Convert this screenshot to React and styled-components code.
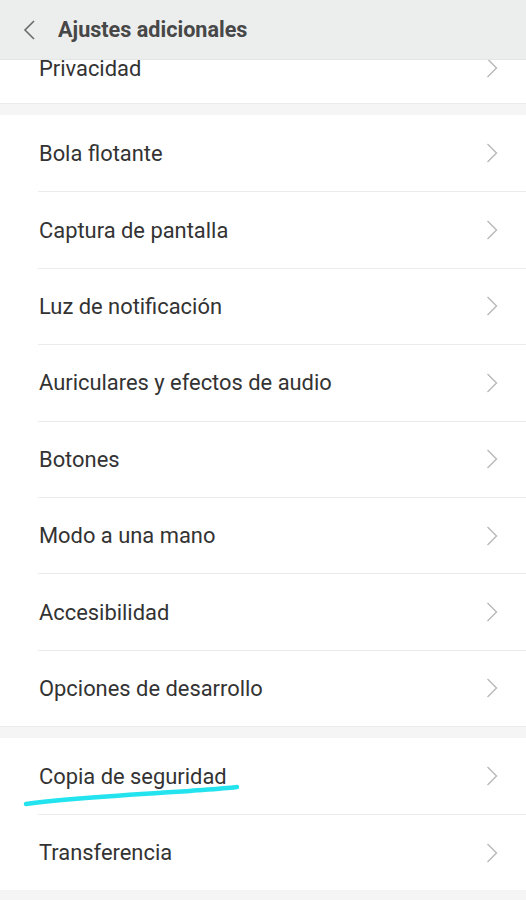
import React from 'react';
import styled, { createGlobalStyle } from 'styled-components';

const GlobalStyle = createGlobalStyle`
    html, body {
        margin: 0;
        padding: 0;
        background: #f5f5f5;
    }
    body {
        font-family: Roboto, "Noto Sans", "Liberation Sans", sans-serif;
        -webkit-font-smoothing: antialiased;
    }
`;

const Screen = styled.div`
    width: 526px;
    height: 900px;
    display: flex;
    flex-direction: column;
    overflow: hidden;
    background: #f5f5f5;
`;

const Header = styled.div`
    height: 59px;
    flex-shrink: 0;
    display: flex;
    align-items: center;
    gap: 22px;
    padding-left: 22px;
    background: #eceeee;
    border-bottom: 1px solid #e4e6e6;
    z-index: 1;
`;

const Title = styled.h1`
    margin: 0;
    font-size: 21.6px;
    font-weight: 700;
    color: #474747;
`;

const Scroller = styled.div`
    flex: 1;
    overflow: hidden;
    position: relative;
`;

const List = styled.div`
    display: flex;
    flex-direction: column;
    margin-top: -27px;
`;

const Group = styled.div`
    background: #fff;
    display: flex;
    flex-direction: column;
`;

const Gap = styled.div`
    height: 11px;
    background: #f5f5f5;
    border-top: 1px solid #ececec;
`;

const Row = styled.div`
    height: ${p => p.h || 76}px;
    display: flex;
    align-items: center;
    justify-content: space-between;
    margin-left: 38px;
    padding-left: 1px;
    padding-right: 28px;
    box-sizing: border-box;
    border-top: ${p => p.first ? 'none' : '1px solid #ececec'};
`;

const Label = styled.span`
    font-size: 21.9px;
    color: #333;
`;

const Underline = styled.svg`
    position: absolute;
    left: 0;
    top: 0;
    pointer-events: none;
`;

const Back = () => (
    <svg width="14" height="22" viewBox="0 0 14 22">
        <path d="M12 2 L3 11 L12 20" fill="none" stroke="#6a6a6a" strokeWidth="1.6" />
    </svg>
);

const Chevron = () => (
    <svg width="12" height="22" viewBox="0 0 12 22">
        <path d="M1.5 2 L10.5 11 L1.5 20" fill="none" stroke="#b8b8b8" strokeWidth="1.4" />
    </svg>
);

const groups = [
    ['Privacidad'],
    ['Bola flotante', 'Captura de pantalla', 'Luz de notificación', 'Auriculares y efectos de audio',
        'Botones', 'Modo a una mano', 'Accesibilidad', 'Opciones de desarrollo'],
    ['Copia de seguridad', 'Transferencia'],
];

const rowHeight = gi => (gi === 0 ? 70 : gi === 1 ? 76.4 : 76);

export default function App() {
    return (
        <Screen>
            <GlobalStyle />
            <Header>
                <Back />
                <Title>Ajustes adicionales</Title>
            </Header>
            <Scroller>
                <List>
                    {groups.map((items, gi) => (
                        <React.Fragment key={gi}>
                            {gi > 0 && <Gap />}
                            <Group>
                                {items.map((label, i) => (
                                    <Row key={label} first={i === 0} h={rowHeight(gi)}>
                                        <Label>{label}</Label>
                                        <Chevron />
                                    </Row>
                                ))}
                            </Group>
                        </React.Fragment>
                    ))}
                </List>
                <Underline width="526" height="841">
                    <path
                        d="M26 744 C 70 738, 140 734, 190 731 C 215 729, 230 728, 237 727"
                        fill="none"
                        stroke="#22e3ee"
                        strokeWidth="4.5"
                        strokeLinecap="round"
                    />
                </Underline>
            </Scroller>
        </Screen>
    );
}
